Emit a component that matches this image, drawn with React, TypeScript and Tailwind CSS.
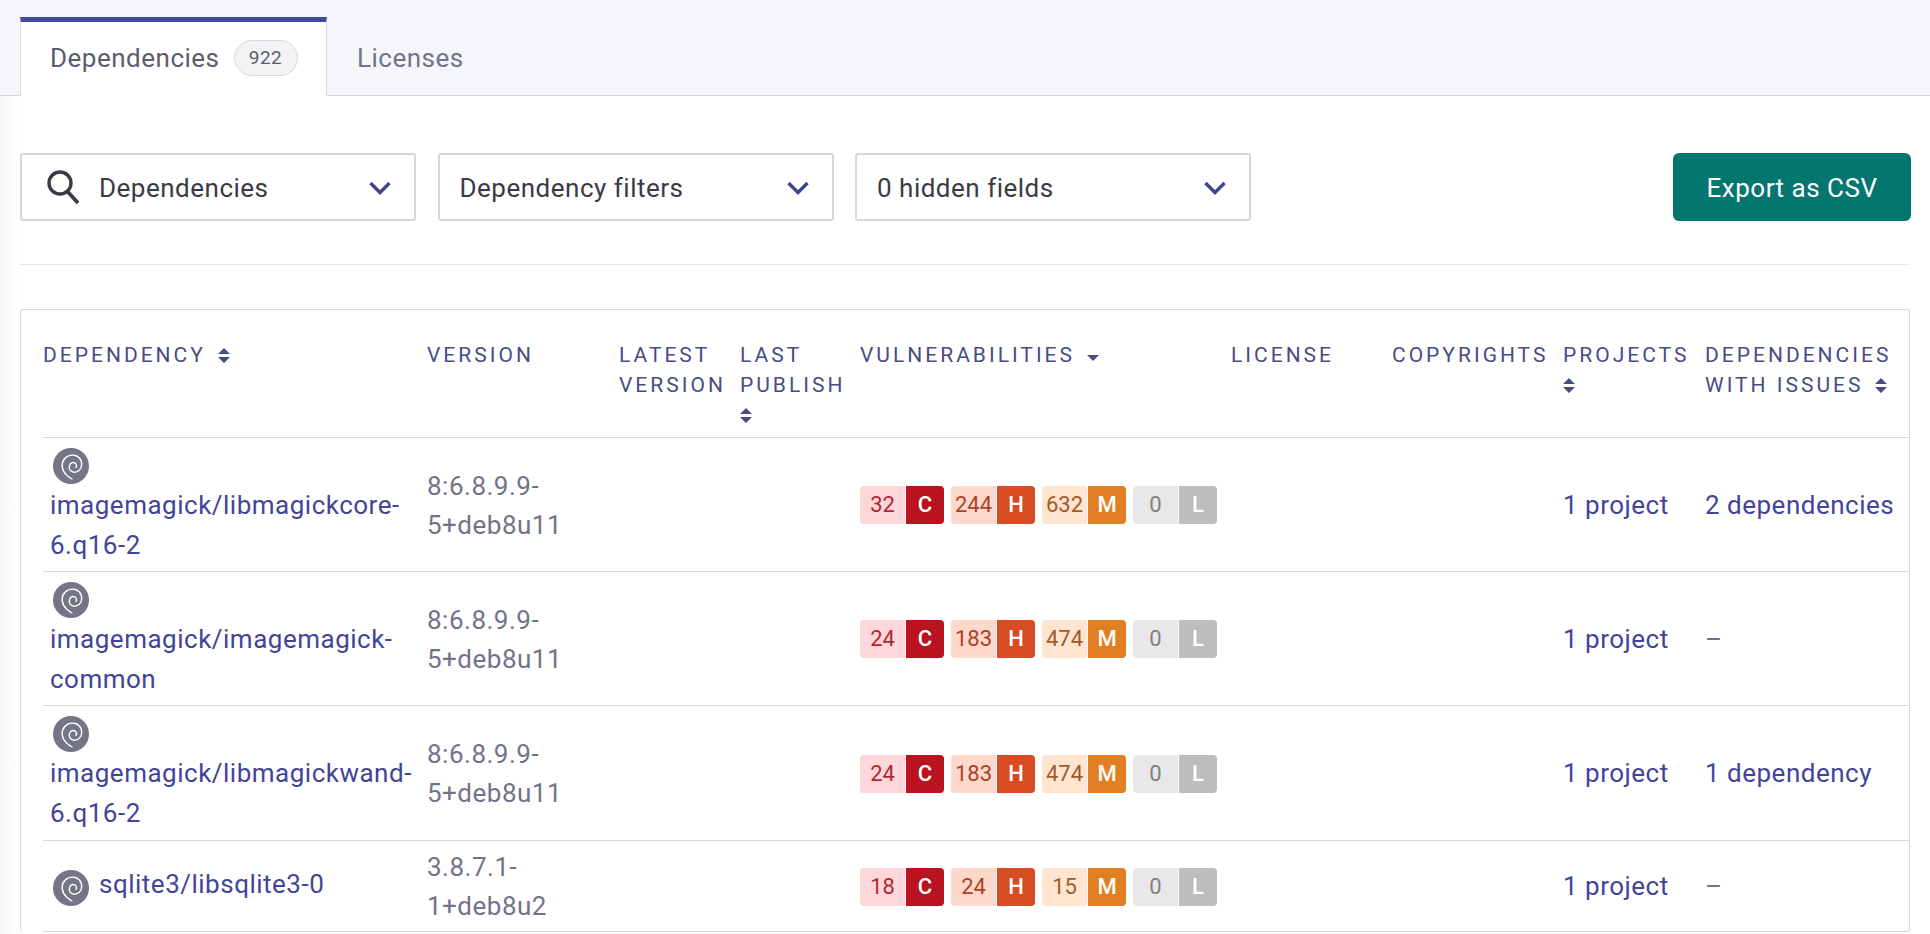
import React from "react";

const font = { fontFamily: "Roboto, sans-serif" };

function Sort({ className = "" }: { className?: string }) {
  return (
    <svg width="12" height="15" viewBox="0 0 12 15" className={"inline-block align-[-1px] " + className}>
      <path d="M6 0 L12 6 H0 Z M6 15 L12 9 H0 Z" fill="#484c84" />
    </svg>
  );
}

function Caret() {
  return (
    <svg width="12" height="6" viewBox="0 0 12 6" className="ml-[4px] inline-block align-[1px]">
      <path d="M0 0 H12 L6 6 Z" fill="#484c84" />
    </svg>
  );
}

function Chevron() {
  return (
    <svg width="22" height="14" viewBox="0 0 22 14" fill="none" className="mt-[2px]">
      <path d="M1.5 2 L11 11.5 L20.5 2" stroke="#3f448f" strokeWidth="3.4" />
    </svg>
  );
}

function Debian({ low }: { low: boolean }) {
  return (
    <svg width="36" height="36" viewBox="0 0 36 36" className={"inline-block " + (low ? "align-[-13px]" : "align-[-10px]")}>
      <circle cx="18" cy="18" r="18" fill="#747585" />
      <path
        d="M19 31 C12 27 8 21 9.5 14.5 C11 9 17 6 22.5 7.5 C28 9.5 30 15 28 20 C26 24 21 25.5 18 23 C15 20.5 16 15.5 19.5 14.5 C22.5 14 24.5 17 23 19.5"
        fill="none"
        stroke="#fff"
        strokeWidth="1.4"
        strokeLinecap="round"
      />
    </svg>
  );
}

function Badge({ n, l, a, b, t }: { n: number; l: string; a: string; b: string; t: string }) {
  return (
    <span className="flex h-[38px] w-[84px] overflow-hidden rounded-[4px] text-[22px] leading-[38px] tracking-normal">
      <span className={"w-[45px] text-center " + a + " " + t}>{n}</span>
      <span className={"ml-px w-[38px] text-center font-medium text-white " + b}>{l}</span>
    </span>
  );
}

function Vuln({ v }: { v: number[] }) {
  return (
    <div className="flex gap-[7px]">
      <Badge n={v[0]} l="C" a="bg-[#ffd6d9]" b="bg-[#b8131f]" t="text-[#b3262e]" />
      <Badge n={v[1]} l="H" a="bg-[#ffd8cc]" b="bg-[#d84b23]" t="text-[#ab4226]" />
      <Badge n={v[2]} l="M" a="bg-[#ffe5cf]" b="bg-[#e27f22]" t="text-[#a05a28]" />
      <Badge n={v[3]} l="L" a="bg-[#e8e8e8]" b="bg-[#bdbdbd]" t="text-[#808080]" />
    </div>
  );
}

function Select({ label, icon }: { label: string; icon?: boolean }) {
  return (
    <div className="flex h-[68px] w-[396px] items-center rounded-[3px] border-2 border-[#d6d7de] bg-white pl-[20px] pr-[23px] text-[26px] tracking-[0.5px] text-[#3a3a45]">
      {icon && (
        <svg width="34" height="38" viewBox="0 0 34 38" fill="none" className="ml-[4px] mr-[19px] shrink-0">
          <circle cx="14" cy="15" r="11" stroke="#3a3a45" strokeWidth="3.4" />
          <path d="M22 24 L32 35" stroke="#3a3a45" strokeWidth="3.8" />
        </svg>
      )}
      <span className="flex-1 pt-[3px]">{label}</span>
      <Chevron />
    </div>
  );
}

const rows = [
  { name: "imagemagick/libmagickcore-6.q16-2", ver: "8:6.8.9.9-5+deb8u11", v: [32, 244, 632, 0], dep: "2 dependencies", h: "h-[134px]" },
  { name: "imagemagick/imagemagick-common", ver: "8:6.8.9.9-5+deb8u11", v: [24, 183, 474, 0], dep: "–", h: "h-[134px]" },
  { name: "imagemagick/libmagickwand-6.q16-2", ver: "8:6.8.9.9-5+deb8u11", v: [24, 183, 474, 0], dep: "1 dependency", h: "h-[135px]" },
  { name: "sqlite3/libsqlite3-0", ver: "3.8.7.1-1+deb8u2", v: [18, 24, 15, 0], dep: "–", h: "h-[91px]" },
];

const th = "p-0 pt-[30px] pr-[8px] text-left align-top font-normal uppercase";

export default function App() {
  return (
    <div style={font} className="h-[934px] w-[1930px] overflow-hidden bg-[linear-gradient(90deg,#f8f8f8,#ffffff_20px)]">
      <div className="flex h-[96px] items-end border-b border-[#d3d5e0] bg-[#f5f6fa] pl-[20px]">
        <div className="-mb-px flex h-[79px] w-[307px] items-center border-x border-t-[5px] border-x-[#d3d5e0] border-t-[#434a9c] bg-white pb-[2px] pl-[29px] text-[26px] tracking-[0.5px] text-[#5b5c6e]">
          Dependencies
          <span className="ml-[14px] flex h-[36px] w-[64px] items-center justify-center rounded-full border border-[#d8d8de] bg-[#f3f3f5] text-[19px] tracking-[0.5px]">
            922
          </span>
        </div>
        <div className="flex h-[78px] items-center pl-[30px] pt-[4px] text-[26px] tracking-[0.5px] text-[#72738a]">Licenses</div>
      </div>
      <div className="px-[20px]">
        <div className="flex h-[169px] items-start justify-between border-b border-[#e8e8ec] pt-[57px]">
          <div className="flex gap-[21.5px]">
            <Select label="Dependencies" icon />
            <Select label="Dependency filters" />
            <Select label="0 hidden fields" />
          </div>
          <div className="-mr-px flex h-[68px] w-[238px] items-center justify-center rounded-[6px] bg-[#03766f] pt-[2px] text-[26px] tracking-[0.5px] text-white">
            Export as CSV
          </div>
        </div>
        <div className="mt-[44px] rounded-[3px] border border-b-0 border-[#d6d7de] bg-white pl-[22px]">
          <table className="w-full table-fixed border-collapse">
            <colgroup>
              <col className="w-[384px]" />
              <col className="w-[192px]" />
              <col className="w-[121px]" />
              <col className="w-[120px]" />
              <col className="w-[371px]" />
              <col className="w-[161px]" />
              <col className="w-[171px]" />
              <col className="w-[142px]" />
              <col />
            </colgroup>
            <thead>
              <tr className="h-[127px] border-b border-[#d6d7de] text-[21px] leading-[30px] tracking-[3px] text-[#484c84]">
                <th className={th}>Dependency <Sort className="ml-[4px]" /></th>
                <th className={th}>Version</th>
                <th className={th + " !pr-0"}>Latest Version</th>
                <th className={th + " !pr-0"}>Last Publish <Sort /></th>
                <th className={th}>Vulnerabilities <Caret /></th>
                <th className={th}>License</th>
                <th className={th + " !pr-0"}>Copyrights</th>
                <th className={th + " !pr-0"}>Projects <Sort /></th>
                <th className={th + " !pr-0"}>Dependencies with issues <Sort className="ml-[3px]" /></th>
              </tr>
            </thead>
            <tbody className="text-[26px] leading-[39px] tracking-[0.5px]">
              {rows.map((r, i) => (
                <tr key={r.name} className={"border-b border-[#d6d7de] " + r.h}>
                  <td className={"p-0 pl-[7px] align-middle leading-[40px] " + (i === 3 ? "pb-[1px]" : "pt-[1px]")}>
                    <span className="ml-[3px] mr-[10px]"><Debian low={i === 3} /></span>
                    <a className="text-[#414599]">{r.name}</a>
                  </td>
                  <td className="p-0 pr-[40px] pt-[3px] align-middle text-[#72738a]">{r.ver}</td>
                  <td />
                  <td />
                  <td className="p-0 pt-[2px] align-middle"><Vuln v={r.v} /></td>
                  <td />
                  <td />
                  <td className="p-0 pt-[2px] align-middle text-[#414599]">1 project</td>
                  <td className={"p-0 pt-[2px] align-middle " + (r.dep === "–" ? "text-[#72738a]" : "text-[#414599]")}>{r.dep}</td>
                </tr>
              ))}
            </tbody>
          </table>
        </div>
      </div>
    </div>
  );
}
